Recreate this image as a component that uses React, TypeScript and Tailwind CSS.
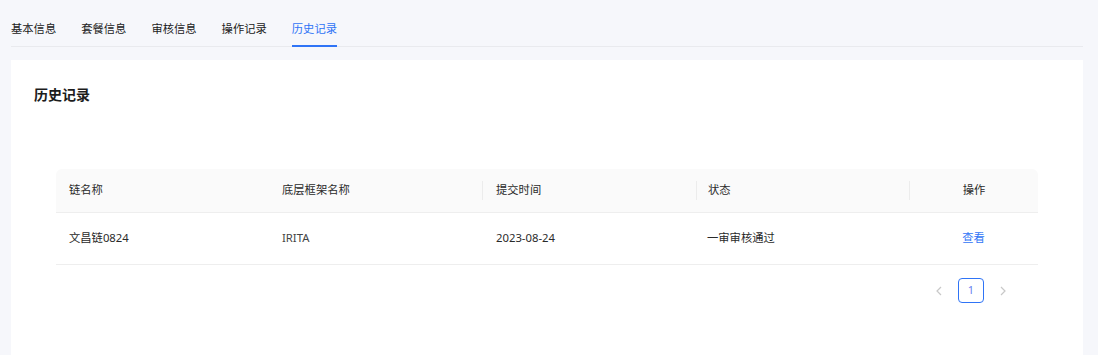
const tabs = ["基本信息", "套餐信息", "审核信息", "操作记录", "历史记录"];

const rows = [
  { chain: "文昌链0824", frame: "IRITA", time: "2023-08-24", status: "一审审核通过" },
];

const font = { fontFamily: '"Noto Sans", "Noto Sans CJK SC", sans-serif' };

export default function App() {
  return (
    <div className="w-[1098px] h-[355px] overflow-hidden bg-[#f6f7fb]" style={font}>
      {/* tabs */}
      <div className="ml-[11px] mr-[15px] h-[47px] flex items-end border-b border-[#e9eaee]">
        {tabs.map((t, i) => {
          const active = i === tabs.length - 1;
          return (
            <div
              key={t}
              className={
                "mr-[25px] pb-[9px] text-[11.3px] leading-[15px] border-b-2 -mb-px " +
                (active ? "text-[#2f74f6] border-[#2f74f6]" : "text-[#222] border-transparent")
              }
            >
              {t}
            </div>
          );
        })}
      </div>

      {/* card */}
      <div className="ml-[11px] mr-[15px] mt-[13px] bg-white h-[300px] pt-[26px]">
        <h2 className="pl-[23px] text-[14px] leading-[18px] font-semibold text-[#1c1c1c]">历史记录</h2>

        <div className="mx-[45px] mt-[65px]">
          <div className="flex h-[44px] items-center bg-[#fafafa] rounded-t-[6px] border-b border-[#eeeeee] text-[11.3px] text-[#2a2a2a]">
            <div className="w-[213px] pl-[13px]">链名称</div>
            <div className="w-[213px] pl-[13px]">底层框架名称</div>
            <div className="w-[214px] pl-[13px] border-l border-[#ececec] h-[19px] flex items-center">提交时间</div>
            <div className="w-[213px] pl-[11px] border-l border-[#ececec] h-[19px] flex items-center">状态</div>
            <div className="flex-1 text-center border-l border-[#ececec] h-[19px] flex items-center justify-center">操作</div>
          </div>
          {rows.map((r) => (
            <div key={r.chain} className="flex h-[52px] items-center border-b border-[#eeeeee] text-[11.3px] text-[#2a2a2a]">
              <div className="w-[213px] pl-[13px]">{r.chain}</div>
              <div className="w-[213px] pl-[13px] text-[#444]">{r.frame}</div>
              <div className="w-[214px] pl-[14px]">{r.time}</div>
              <div className="w-[213px] pl-[11px]">{r.status}</div>
              <div className="flex-1 text-center text-[#2f74f6] cursor-pointer">查看</div>
            </div>
          ))}

          <div className="flex justify-end items-center gap-[6px] mt-[13px] pr-[22px]">
            <button className="w-[26px] h-[25px] flex items-center justify-center text-[#c8c8c8]">
              <svg width="8" height="10" viewBox="0 0 8 10" fill="none" stroke="currentColor" strokeWidth="1.2">
                <path d="M6 1 L2 5 L6 9" />
              </svg>
            </button>
            <button className="w-[26px] h-[25px] rounded-[4px] border border-[#2f74f6] text-[11px] text-[#6a7ff0] flex items-center justify-center">
              1
            </button>
            <button className="w-[26px] h-[25px] flex items-center justify-center text-[#c8c8c8]">
              <svg width="8" height="10" viewBox="0 0 8 10" fill="none" stroke="currentColor" strokeWidth="1.2">
                <path d="M2 1 L6 5 L2 9" />
              </svg>
            </button>
          </div>
        </div>
      </div>
    </div>
  );
}
